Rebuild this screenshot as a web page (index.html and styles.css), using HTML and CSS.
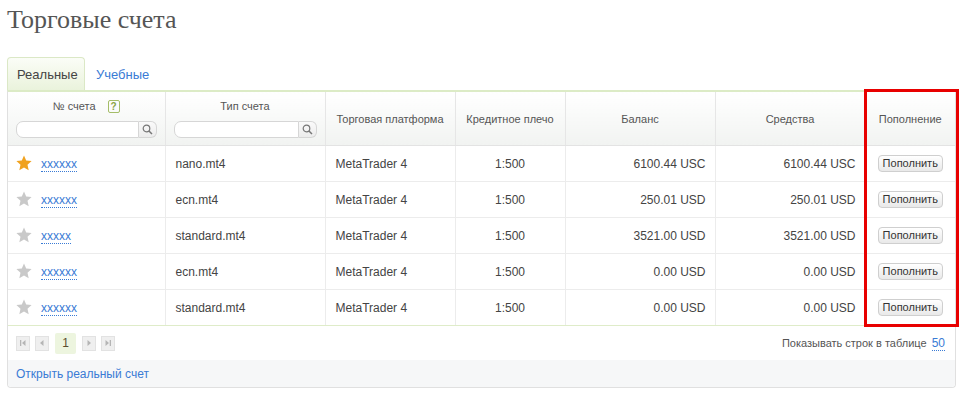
FILE: index.html
```html
<!DOCTYPE html>
<html>
  <head>
    <meta charset="UTF-8">
    <link rel="stylesheet" href="styles.css">
  </head>
  <body>
    <div id="page">
      <h1 class="title">Торговые счета</h1>

      <div class="tabs">
        <span class="tab active">Реальные</span>
        <a class="tab" href="#">Учебные</a>
      </div>

      <div id="accounts">
        <table class="grid">
          <colgroup>
            <col style="width: 157px">
            <col style="width: 160px">
            <col style="width: 130px">
            <col style="width: 110px">
            <col style="width: 150px">
            <col style="width: 150px">
            <col>
          </colgroup>
          <thead>
            <tr>
              <th>
                <div class="th-label">№ счета <span class="help">?</span></div>
                <div class="search"><input type="text"><span class="search-btn"><svg width="11" height="11" viewBox="0 0 11 11"><circle cx="4.5" cy="4.5" r="3.3" fill="none" stroke="#777" stroke-width="1.2"/><path d="M7 7 L10 10" stroke="#777" stroke-width="1.5"/></svg></span></div>
              </th>
              <th>
                <div class="th-label">Тип счета</div>
                <div class="search"><input type="text"><span class="search-btn"><svg width="11" height="11" viewBox="0 0 11 11"><circle cx="4.5" cy="4.5" r="3.3" fill="none" stroke="#777" stroke-width="1.2"/><path d="M7 7 L10 10" stroke="#777" stroke-width="1.5"/></svg></span></div>
              </th>
              <th>Торговая платформа</th>
              <th>Кредитное плечо</th>
              <th>Баланс</th>
              <th>Средства</th>
              <th>Пополнение</th>
            </tr>
          </thead>
          <tbody>
            <tr>
              <td class="acc"><svg class="star fav" viewBox="0 0 16 16"><path d="M8 0.5 L10.2 5.6 L15.6 6.1 L11.5 9.8 L12.7 15.2 L8 12.4 L3.3 15.2 L4.5 9.8 L0.4 6.1 L5.8 5.6 Z"/></svg><a href="#">xxxxxx</a></td>
              <td>nano.mt4</td>
              <td>MetaTrader 4</td>
              <td class="center">1:500</td>
              <td class="num">6100.44 USC</td>
              <td class="num">6100.44 USC</td>
              <td class="center"><button class="fund">Пополнить</button></td>
            </tr>
            <tr>
              <td class="acc"><svg class="star" viewBox="0 0 16 16"><path d="M8 0.5 L10.2 5.6 L15.6 6.1 L11.5 9.8 L12.7 15.2 L8 12.4 L3.3 15.2 L4.5 9.8 L0.4 6.1 L5.8 5.6 Z"/></svg><a href="#">xxxxxx</a></td>
              <td>ecn.mt4</td>
              <td>MetaTrader 4</td>
              <td class="center">1:500</td>
              <td class="num">250.01 USD</td>
              <td class="num">250.01 USD</td>
              <td class="center"><button class="fund">Пополнить</button></td>
            </tr>
            <tr>
              <td class="acc"><svg class="star" viewBox="0 0 16 16"><path d="M8 0.5 L10.2 5.6 L15.6 6.1 L11.5 9.8 L12.7 15.2 L8 12.4 L3.3 15.2 L4.5 9.8 L0.4 6.1 L5.8 5.6 Z"/></svg><a href="#">xxxxx</a></td>
              <td>standard.mt4</td>
              <td>MetaTrader 4</td>
              <td class="center">1:500</td>
              <td class="num">3521.00 USD</td>
              <td class="num">3521.00 USD</td>
              <td class="center"><button class="fund">Пополнить</button></td>
            </tr>
            <tr>
              <td class="acc"><svg class="star" viewBox="0 0 16 16"><path d="M8 0.5 L10.2 5.6 L15.6 6.1 L11.5 9.8 L12.7 15.2 L8 12.4 L3.3 15.2 L4.5 9.8 L0.4 6.1 L5.8 5.6 Z"/></svg><a href="#">xxxxxx</a></td>
              <td>ecn.mt4</td>
              <td>MetaTrader 4</td>
              <td class="center">1:500</td>
              <td class="num">0.00 USD</td>
              <td class="num">0.00 USD</td>
              <td class="center"><button class="fund">Пополнить</button></td>
            </tr>
            <tr>
              <td class="acc"><svg class="star" viewBox="0 0 16 16"><path d="M8 0.5 L10.2 5.6 L15.6 6.1 L11.5 9.8 L12.7 15.2 L8 12.4 L3.3 15.2 L4.5 9.8 L0.4 6.1 L5.8 5.6 Z"/></svg><a href="#">xxxxxx</a></td>
              <td>standard.mt4</td>
              <td>MetaTrader 4</td>
              <td class="center">1:500</td>
              <td class="num">0.00 USD</td>
              <td class="num">0.00 USD</td>
              <td class="center"><button class="fund">Пополнить</button></td>
            </tr>
          </tbody>
        </table>

        <div class="pager">
          <div class="pages">
            <span class="pg"><svg width="8" height="8" viewBox="0 0 8 8"><rect x="1" y="1" width="1.3" height="6" fill="#b5b5b5"/><path d="M6.5 1 L3 4 L6.5 7 Z" fill="#b5b5b5"/></svg></span>
            <span class="pg"><svg width="8" height="8" viewBox="0 0 8 8"><path d="M5.5 1 L2 4 L5.5 7 Z" fill="#b5b5b5"/></svg></span>
            <span class="pg current">1</span>
            <span class="pg"><svg width="8" height="8" viewBox="0 0 8 8"><path d="M2.5 1 L6 4 L2.5 7 Z" fill="#b5b5b5"/></svg></span>
            <span class="pg"><svg width="8" height="8" viewBox="0 0 8 8"><path d="M1.5 1 L5 4 L1.5 7 Z" fill="#b5b5b5"/><rect x="5.7" y="1" width="1.3" height="6" fill="#b5b5b5"/></svg></span>
          </div>
          <div class="rows">Показывать строк в таблице <a href="#">50</a></div>
        </div>

        <div class="footer"><a href="#">Открыть реальный счет</a></div>

        <div class="highlight"></div>
      </div>
    </div>
  </body>
</html>
```

FILE: styles.css
```css
body {
  margin: 0;
  font-family: "Liberation Sans", Arial, sans-serif;
  color: #444;
  background: #fff;
}
a {
  color: #3a7bd5;
  text-decoration: none;
}
#page {
  width: 949px;
  padding: 0 4px 0 7px;
}
.title {
  margin: 0;
  padding-top: 6px;
  height: 51px;
  font-family: "Liberation Serif", "DejaVu Serif", serif;
  font-weight: normal;
  font-size: 26px;
  line-height: 28px;
  color: #555;
}
.tabs {
  display: flex;
  align-items: flex-end;
  height: 33px;
}
.tab {
  display: block;
  height: 32px;
  line-height: 33px;
  padding: 0 9px;
  font-size: 13px;
}
.tab.active {
  width: 58px;
  border: 1px solid #dbe8c6;
  border-bottom: none;
  border-radius: 4px 4px 0 0;
  background: linear-gradient(#fbfdf7, #eaf3dc);
  color: #444;
}
.tab + .tab {
  margin-left: 2px;
}
#accounts {
  position: relative;
  border: 1px solid #e0e0e0;
  border-top: 2px solid #dcebc6;
  border-radius: 0 0 4px 4px;
}
.grid {
  width: 100%;
  border-collapse: collapse;
  table-layout: fixed;
  font-size: 12px;
}
.grid th {
  height: 53px;
  padding: 0 8px;
  font-size: 11px;
  font-weight: normal;
  color: #555;
  text-align: center;
  vertical-align: middle;
  border-left: 1px solid #e6e6e6;
  border-bottom: 1px solid #e3e3e3;
  background: linear-gradient(#fff, #f1f3f1);
}
.grid th:first-child, .grid td:first-child {
  border-left: none;
}
.th-label {
  height: 14px;
  line-height: 14px;
  margin-bottom: 8px;
}
.help {
  display: inline-block;
  width: 10px;
  height: 11px;
  line-height: 11px;
  margin-left: 9px;
  border: 1px solid #a5bd68;
  border-radius: 2px;
  color: #8aa446;
  font-size: 10px;
  font-weight: bold;
}
.search {
  display: flex;
  height: 17px;
}
.search input {
  flex: 1;
  min-width: 0;
  height: 17px;
  box-sizing: border-box;
  margin: 0;
  padding: 0 4px;
  border: 1px solid #d6d6d6;
  border-radius: 7px 0 0 7px;
  background: #fff;
}
.search-btn {
  display: flex;
  align-items: center;
  justify-content: center;
  width: 18px;
  height: 17px;
  box-sizing: border-box;
  border: 1px solid #d6d6d6;
  border-left: none;
  border-radius: 0 6px 6px 0;
  background: linear-gradient(#fafafa, #ececec);
}
.grid td {
  height: 35px;
  padding: 0 10px 0 10px;
  border-left: 1px solid #ececec;
  border-bottom: 1px solid #ececec;
  white-space: nowrap;
  color: #444;
}
.grid td.num {
  text-align: right;
  padding-right: 9px;
}
.grid td.center {
  text-align: center;
  padding: 0;
}
.grid tbody tr:last-child td {
  border-bottom: 1px solid #dfecc9;
}
.acc {
  padding-left: 8px !important;
}
.star {
  display: inline-block;
  width: 16px;
  height: 16px;
  margin: -5px 9px -5px 0;
  vertical-align: 2px;
  fill: #c9c9c9;
}
.star.fav {
  fill: #f0a21f;
}
.acc a {
  border-bottom: 1px dotted #3a7bd5;
}
.fund {
  height: 17px;
  padding: 0 4px;
  font-family: "Liberation Sans", Arial, sans-serif;
  font-size: 11px;
  line-height: 15px;
  color: #333;
  border: 1px solid #cfcfcf;
  border-radius: 4px;
  background: linear-gradient(#fff, #e9e9e9);
}
.pager {
  display: flex;
  justify-content: space-between;
  align-items: center;
  height: 34px;
  padding: 0 10px 0 8px;
}
.pages {
  display: flex;
  align-items: center;
  gap: 5px;
}
.pg {
  display: flex;
  align-items: center;
  justify-content: center;
  width: 12px;
  height: 13px;
  border: 1px solid #e2e2e2;
  background: #efefef;
}
.pg.current {
  width: 21px;
  height: 21px;
  margin: 0 1px;
  border: none;
  border-radius: 2px;
  background: #edf5df;
  color: #5b4e2e;
  font-size: 12px;
}
.rows {
  font-size: 11px;
  color: #555;
}
.rows a {
  margin-left: 2px;
  font-size: 12px;
  border-bottom: 1px dotted #3a7bd5;
}
.footer {
  height: 27px;
  line-height: 28px;
  padding-left: 8px;
  font-size: 12px;
  background: #f6f7f8;
  border-radius: 0 0 4px 4px;
}
.highlight {
  position: absolute;
  top: -3px;
  right: -4px;
  width: 89px;
  height: 232px;
  border: 3px solid #e80000;
  pointer-events: none;
}
```
